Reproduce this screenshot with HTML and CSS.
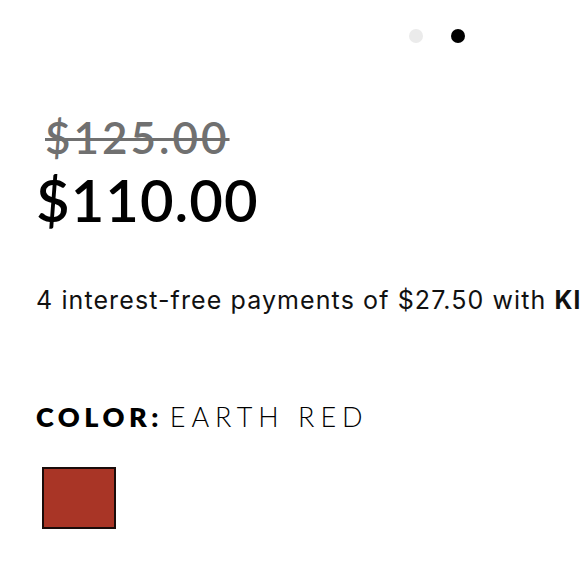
FILE: index.html
```html
<!DOCTYPE html>
<html>
<head>
<meta charset="utf-8">
<link rel="stylesheet" href="styles.css">
</head>
<body>
<div class="page">
  <div class="dots">
    <span class="dot"></span>
    <span class="dot active"></span>
  </div>
  <div class="prices">
    <div class="old-price">$125.00</div>
    <div class="price">$110.00</div>
  </div>
  <div class="klarna">4 interest-free payments of $27.50 with <b>Klarna</b></div>
  <div class="color-label"><b>COLOR:</b> <span class="color-name">EARTH RED</span></div>
  <div class="swatches">
    <span class="swatch"></span>
  </div>
</div>
</body>
</html>
```
FILE: styles.css
```css
html, body {
  margin: 0;
  padding: 0;
  background: #fff;
  overflow: hidden;
}
.page {
  width: 580px;
  height: 580px;
  overflow: hidden;
  display: flex;
  flex-direction: column;
  padding-left: 36px;
  box-sizing: border-box;
  font-family: "Lato", sans-serif;
  color: #000;
}
.dots {
  display: flex;
  gap: 28px;
  margin-top: 29px;
  margin-left: 373px;
}
.dot {
  width: 14px;
  height: 14px;
  border-radius: 50%;
  background: #ebebeb;
}
.dot.active {
  background: #000;
}
.prices {
  display: flex;
  flex-direction: column;
  margin-top: 72px;
}
.old-price {
  font-size: 44px;
  line-height: 44px;
  color: #707070;
  font-weight: 600;
  letter-spacing: 3px;
  text-decoration: line-through;
  text-decoration-thickness: 3px;
  margin-left: 9px;
}
.price {
  font-size: 58px;
  line-height: 60px;
  font-weight: 600;
  letter-spacing: 1px;
  margin-top: 11px;
}
.klarna {
  font-family: "Inter", sans-serif;
  font-size: 25px;
  letter-spacing: 1.1px;
  white-space: nowrap;
  margin-top: 55px;
  color: #111;
}
.color-label {
  font-size: 27px;
  margin-top: 85px;
  white-space: nowrap;
}
.color-label b {
  font-weight: 800;
  letter-spacing: 4.5px;
}
.color-name {
  font-weight: 300;
  letter-spacing: 6px;
}
.swatches {
  display: flex;
  margin-top: 34px;
  margin-left: 6px;
}
.swatch {
  width: 70px;
  height: 58px;
  background: #a93526;
  border: 2px solid #1a0c0a;
}
```
